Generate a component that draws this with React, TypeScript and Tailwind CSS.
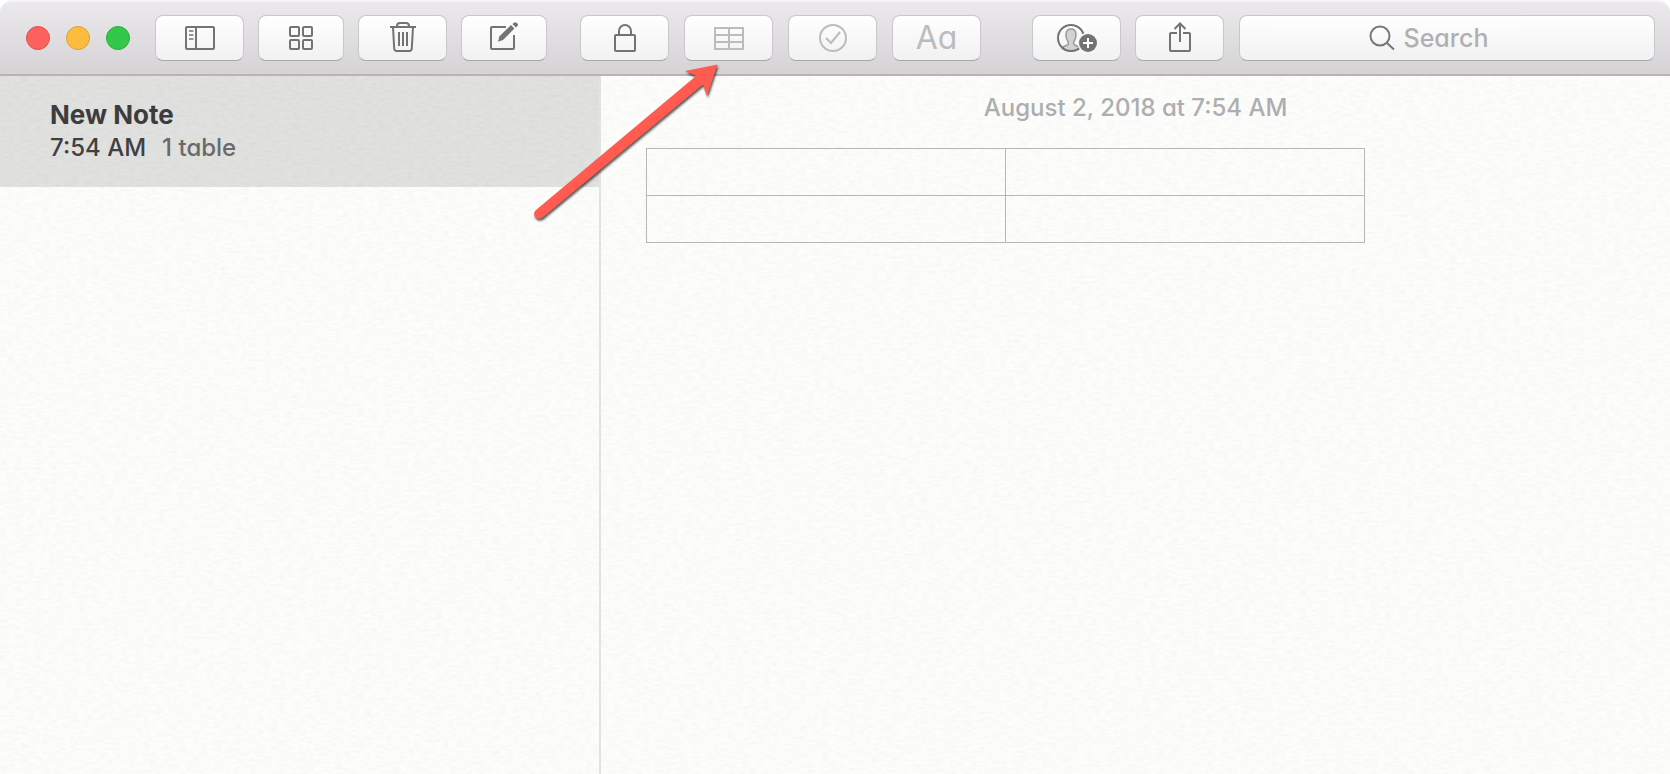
import type { ReactNode } from 'react';

type ToolButtonProps = {
  label: string;
  width?: string;
  disabled?: boolean;
  children: ReactNode;
};

const ToolButton = ({ label, width = 'w-[89px]', disabled, children }: ToolButtonProps) => (
  <button
    type="button"
    aria-label={label}
    disabled={disabled}
    className={`${width} flex h-[46px] shrink-0 items-center justify-center rounded-lg border border-[#c9c7ca] border-b-[#a9a7aa] bg-linear-to-b from-white to-[#f1f1f1] ${disabled ? 'text-[#bcbcbc]' : 'text-[#737373]'}`}
  >
    {children}
  </button>
);

const iconProps = {
  fill: 'none',
  stroke: 'currentColor',
  strokeWidth: 2,
  'aria-hidden': true,
} as const;

const SidebarIcon = () => (
  <svg {...iconProps} width="30" height="32" viewBox="0 0 30 32">
    <rect x="1" y="5" width="28" height="22" rx="1" />
    <path d="M11 5v22" />
    <path d="M4 9h4.500M4 13h4.500M4 17h4.500" strokeWidth="1.500" />
  </svg>
);

const GridIcon = () => (
  <svg {...iconProps} width="24" height="32" viewBox="0 0 24 32">
    <rect x="1" y="5" width="9" height="9" rx="1" />
    <rect x="14" y="5" width="9" height="9" rx="1" />
    <rect x="1" y="18" width="9" height="9" rx="1" />
    <rect x="14" y="18" width="9" height="9" rx="1" />
  </svg>
);

const TrashIcon = () => (
  <svg {...iconProps} width="26" height="32" viewBox="0 0 26 32">
    <path d="M0 5h26" />
    <path d="M7 5V4c0-2 1-3 3-3h6c2 0 3 1 3 3v1" />
    <path d="M3 5l1.200 21.500c.1 1.700 1 2.500 2.500 2.500h12.600c1.500 0 2.400-.8 2.500-2.500L23 5" />
    <path d="M9 10v14M13 10v14M17 10v14" />
  </svg>
);

const ComposeIcon = () => (
  <svg {...iconProps} width="28" height="32" viewBox="0 0 28 32">
    <path d="M16 5H2a1 1 0 0 0-1 1v20a1 1 0 0 0 1 1h21a1 1 0 0 0 1-1V13" />
    <path d="M8 19.700l1.500-5.400L21 3l3.400 3.500L13 17.900z" fill="currentColor" stroke="none" />
    <path d="M22.400 2.100L24 .7c.8-.7 1.800-.7 2.600 0l.8.8c.7.8.7 1.700 0 2.500L26 5.400z" fill="currentColor" stroke="none" />
  </svg>
);

const LockIcon = () => (
  <svg {...iconProps} width="22" height="32" viewBox="0 0 22 32">
    <rect x="1" y="13" width="20" height="16" rx="1" />
    <path d="M5 13V9a6 6 0 0 1 12 0v4" />
  </svg>
);

const TableIcon = () => (
  <svg {...iconProps} width="30" height="32" viewBox="0 0 30 32">
    <rect x="1" y="6" width="28" height="21" />
    <path d="M15 6v21M1 13h28M1 20h28" />
  </svg>
);

const CheckIcon = () => (
  <svg {...iconProps} width="28" height="32" viewBox="0 0 28 32">
    <circle cx="14" cy="16" r="13" />
    <path d="M7 16l5 5 9-11" />
  </svg>
);

const AddPeopleIcon = () => (
  <svg {...iconProps} width="40" height="32" viewBox="0 0 40 32">
    <path
      d="M5 26c1-2 5-2.200 6-3.500.6-.9.500-2 0-3-1.500-2-2.300-4.500-2-7.500.2-3.300 2-5 5-5s4.800 1.700 5 5c.2 3-.6 5.500-2 7.500-.5 1-.6 2.100 0 3 1 1.300 5 1.500 6 3.500-4 4-14 4-18 0z"
      fill="#d2d2d2"
      stroke="#999"
      strokeWidth="1.500"
    />
    <circle cx="14" cy="16" r="13" />
    <circle cx="31" cy="21" r="10.500" fill="#f7f7f7" stroke="none" />
    <circle cx="31" cy="21" r="9" fill="currentColor" stroke="none" />
    <path d="M31 16v10M26 21h10" stroke="#fff" />
  </svg>
);

const ShareIcon = () => (
  <svg {...iconProps} width="22" height="32" viewBox="0 0 22 32">
    <path d="M8 11H2a1 1 0 0 0-1 1v16a1 1 0 0 0 1 1h18a1 1 0 0 0 1-1V12a1 1 0 0 0-1-1h-6" />
    <path d="M11 20V1.500M5.500 7L11 1.500 16.500 7" />
  </svg>
);

const SearchIcon = () => (
  <svg {...iconProps} width="26" height="26" viewBox="0 0 26 26" className="shrink-0 text-[#777]">
    <circle cx="11" cy="11" r="9.500" />
    <path d="M17.500 17.500l7.500 7" />
  </svg>
);

// Fine paper grain behind the whole window body
const PaperTexture = () => (
  <svg className="pointer-events-none absolute inset-0 -z-10 size-full" aria-hidden="true">
    <filter id="paper" x="0" y="0" width="100%" height="100%" colorInterpolationFilters="sRGB">
      <feTurbulence type="fractalNoise" baseFrequency="0.14 0.36" numOctaves="4" seed="4" result="noise" />
      <feColorMatrix
        in="noise"
        type="matrix"
        values="0 0 0 0 0.4  0 0 0 0 0.4  0 0 0 0 0.37  0.08 0 0 0 -0.028"
      />
    </filter>
    <rect width="100%" height="100%" filter="url(#paper)" />
  </svg>
);

const Arrow = () => (
  <svg
    className="pointer-events-none absolute top-[56px] left-[526px] z-10"
    width="204"
    height="174"
    viewBox="526 56 204 174"
    aria-hidden="true"
  >
    <path
      d="M536 210L696 76 685 71 717.500 64.500 707 96 703 84.500 542 218c-5 3-11-3-6-8z"
      fill="#ff5b50"
      className="drop-shadow-[1px_2px_1px_rgba(0,0,0,0.65)]"
    />
  </svg>
);

const App = () => {
  return (
    <div className="relative flex min-h-screen flex-col bg-white font-[Inter,'Liberation_Sans',sans-serif] text-2xl font-medium [font-feature-settings:'cv11']">
      <header className="flex h-[76px] items-center rounded-t-xl border-t-2 border-b-2 border-t-[#f4f3f5] border-b-[#b6b4b8] bg-linear-to-b from-[#ebe9ec] to-[#d5d3d6] pr-[15px] pl-[26px]">
        <div className="mr-[25px] flex gap-4">
          <button type="button" aria-label="Close" className="size-6 rounded-full border border-[#e0504c] bg-[#fc615d]" />
          <button type="button" aria-label="Minimize" className="size-6 rounded-full border border-[#dfa035] bg-[#fdbc40]" />
          <button type="button" aria-label="Zoom" className="size-6 rounded-full border border-[#2bac3a] bg-[#34c84a]" />
        </div>

        <div className="mr-[33px] flex gap-[14px]">
          <ToolButton label="Folders"><SidebarIcon /></ToolButton>
          <ToolButton label="Attachments" width="w-[86px]"><GridIcon /></ToolButton>
          <ToolButton label="Delete"><TrashIcon /></ToolButton>
          <ToolButton label="New note" width="w-[86px]"><ComposeIcon /></ToolButton>
        </div>

        <div className="mr-[51px] flex gap-[15px]">
          <ToolButton label="Lock"><LockIcon /></ToolButton>
          <ToolButton label="Table" disabled><TableIcon /></ToolButton>
          <ToolButton label="Checklist" disabled><CheckIcon /></ToolButton>
          <ToolButton label="Format" disabled>
            <span className="text-[32px] leading-8 font-normal">Aa</span>
          </ToolButton>
        </div>

        <div className="mr-[15px] flex gap-[14px]">
          <ToolButton label="Add people"><AddPeopleIcon /></ToolButton>
          <ToolButton label="Share"><ShareIcon /></ToolButton>
        </div>

        <label className="flex h-[46px] min-w-0 flex-1 items-center justify-center gap-[9px] rounded-lg border border-[#c9c7ca] border-b-[#a9a7aa] bg-linear-to-b from-white to-[#f1f1f1]">
          <SearchIcon />
          <input
            type="text"
            aria-label="Search"
            placeholder="Search"
            className="w-[122px] bg-transparent pt-[2px] text-[25px] text-[#444] outline-none placeholder:text-[#b0b0b0]"
          />
        </label>
      </header>

      <div className="relative isolate flex flex-1 bg-[#fdfdfc]">
        <PaperTexture />

        <aside className="w-[36%] shrink-0 border-r-2 border-[#e2e3e2]">
          <button type="button" className="flex h-[111px] w-full flex-col bg-black/11 px-[50px] pt-[22px] text-left leading-[33px]">
            <span className="text-[26px] font-bold text-[#3c3c3c]">New Note</span>
            <span className="flex gap-4 text-[#6a6a6a]">
              <span className="text-[#404040]">7:54 AM</span>
              <span>1 table</span>
            </span>
          </button>
        </aside>

        <main className="flex-1 px-[45px] pt-4">
          <p className="text-center leading-8 text-[#adaeae]">August 2, 2018 at 7:54 AM</p>
          <table className="mt-6 w-full max-w-[719px] table-fixed border-collapse">
            <tbody>
              {[0, 1].map((row) => (
                <tr key={row} className="h-[47px]">
                  <td className="border border-[#b6b7b7]" />
                  <td className="border border-[#b6b7b7]" />
                </tr>
              ))}
            </tbody>
          </table>
        </main>
      </div>

      <Arrow />
    </div>
  );
};

export default App;
